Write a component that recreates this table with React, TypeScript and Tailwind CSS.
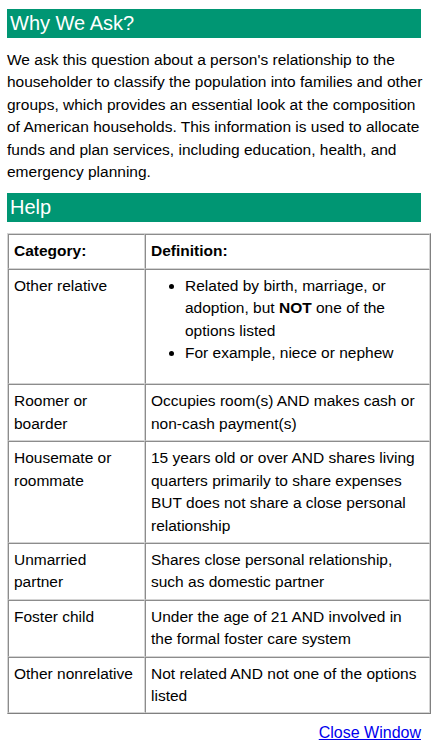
const rows: { cat: string; def: React.ReactNode }[] = [
  {
    cat: "Roomer or boarder",
    def: "Occupies room(s) AND makes cash or non-cash payment(s)",
  },
  {
    cat: "Housemate or roommate",
    def: "15 years old or over AND shares living quarters primarily to share expenses BUT does not share a close personal relationship",
  },
  {
    cat: "Unmarried partner",
    def: "Shares close personal relationship, such as domestic partner",
  },
  {
    cat: "Foster child",
    def: "Under the age of 21 AND involved in the formal foster care system",
  },
  {
    cat: "Other nonrelative",
    def: "Not related AND not one of the options listed",
  },
];

const whyLines = [
  "We ask this question about a person's relationship to the",
  "householder to classify the population into families and other",
  "groups, which provides an essential look at the composition",
  "of American households. This information is used to allocate",
  "funds and plan services, including education, health, and",
  "emergency planning.",
];

const cell =
  "border border-t-[#8c8c8c] border-l-[#8c8c8c] border-b-[#d4d4d4] border-r-[#d4d4d4] px-[5px] py-[5px] align-top text-left";

function Band({ title }: { title: string }) {
  return (
    <div className="h-[29px] bg-[#009673] pl-[3px] text-[20px] leading-[28px] text-white">
      {title}
    </div>
  );
}

export default function App() {
  return (
    <div className="min-h-[754px] bg-white font-['Liberation_Sans',Arial,sans-serif] text-[15.5px] leading-[22.4px] text-black">
      <div className="ml-[7px] w-[414px] pt-[9px]">
        <Band title="Why We Ask?" />
        <p className="mt-[11px] mb-[10px] whitespace-nowrap">
          {whyLines.map((l, i) => (
            <span key={i}>
              {l}
              {i < whyLines.length - 1 && <br />}
            </span>
          ))}
        </p>
        <Band title="Help" />
        <table className="mt-[11px] w-[424px] table-fixed border-separate border-spacing-0 border border-t-[#d4d4d4] border-l-[#d4d4d4] border-b-[#808080] border-r-[#808080]">
          <thead>
            <tr>
              <th className={`${cell} w-[137px] font-bold`}>Category:</th>
              <th className={`${cell} font-bold`}>Definition:</th>
            </tr>
          </thead>
          <tbody>
            <tr>
              <td className={cell}>Other relative</td>
              <td className={cell}>
                <ul className="mb-[14px] list-disc pl-[34px]">
                  <li>
                    Related by birth, marriage, or adoption, but{" "}
                    <b>NOT</b> one of the options listed
                  </li>
                  <li>For example, niece or nephew</li>
                </ul>
              </td>
            </tr>
            {rows.map((r) => (
              <tr key={r.cat}>
                <td className={cell}>{r.cat}</td>
                <td className={cell}>{r.def}</td>
              </tr>
            ))}
          </tbody>
        </table>
        <div className="mt-[10px] text-right text-[16px] leading-[18px]">
          <a href="#" className="text-[#0000ee] underline">
            Close Window
          </a>
        </div>
      </div>
    </div>
  );
}
